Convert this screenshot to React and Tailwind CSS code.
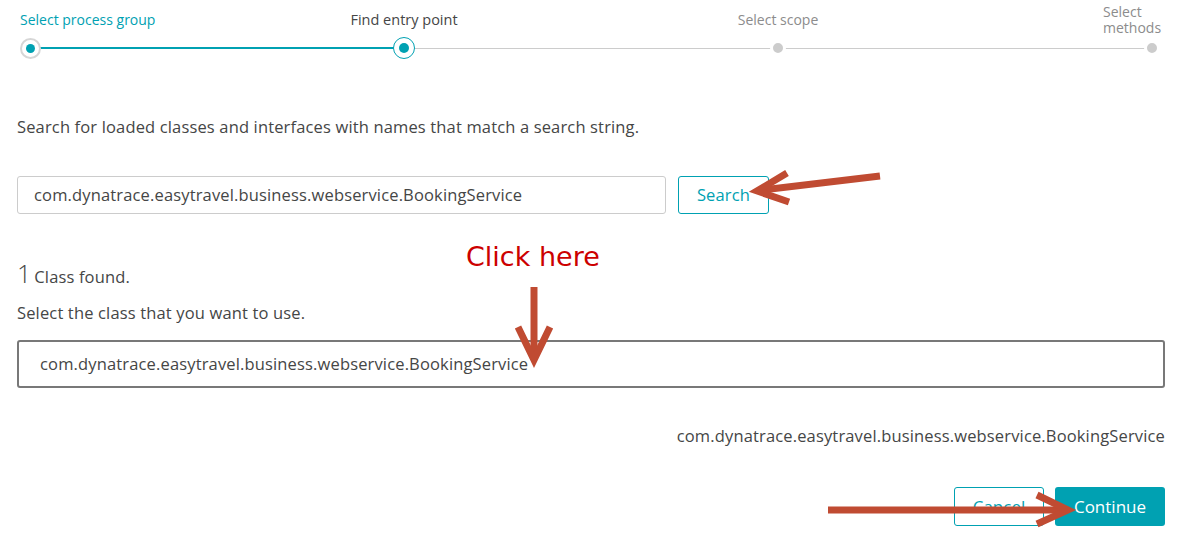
import React from "react";

function Arrows() {
  const c = "#c04b32";
  return (
    <svg
      className="pointer-events-none absolute left-0 top-0"
      width="1189"
      height="539"
      viewBox="0 0 1189 539"
    >
      <g stroke={c} strokeWidth="7" strokeLinecap="butt" fill="none" strokeLinejoin="miter">
        <line x1="880" y1="176" x2="762" y2="190" />
        <polyline points="787,173 757,191 789,202" />
        <line x1="534" y1="287" x2="534" y2="356" />
        <polyline points="518,327 534,360 550,327" />
        <line x1="828" y1="510" x2="1062" y2="510" />
        <polyline points="1037,495 1068,510 1037,524" />
      </g>
    </svg>
  );
}

export default function App() {
  const font = "font-['Open_Sans',sans-serif]";
  return (
    <div className={`relative h-[539px] w-[1189px] overflow-hidden bg-white text-[#454646] ${font}`}>
      {/* Stepper labels */}
      <div className="grid h-[40px] grid-cols-[197px_374px_374px_1fr] pl-[20px] pr-[26px] text-[14px] leading-[16px]">
        <div className="flex items-center text-[#00a1b2]">Select process group</div>
        <div className="flex items-center justify-center text-[14.5px] text-[#454646]">Find entry point</div>
        <div className="flex items-center justify-center text-[#8c8c8c]">Select scope</div>
        <div className="flex items-center justify-end">
          <div className="w-[60px] text-left text-[#8c8c8c]">Select methods</div>
        </div>
      </div>
      {/* Stepper dots */}
      <div className="flex h-[16px] items-center pl-[30px] pr-[37px]">
        <div className="relative z-10 flex w-0 justify-center">
          <div className="flex h-[21px] w-[21px] shrink-0 items-center justify-center rounded-full border-2 border-[#d6d6d6] bg-white">
            <div className="h-[9px] w-[9px] rounded-full bg-[#00a1b2]" />
          </div>
        </div>
        <div className="h-[2px] flex-1 bg-[#00a1b2]" />
        <div className="relative z-10 flex w-0 justify-center">
          <div className="flex h-[22px] w-[22px] shrink-0 items-center justify-center rounded-full border-[1.5px] border-[#00a1b2] bg-white">
            <div className="h-[10px] w-[10px] rounded-full bg-[#00a1b2]" />
          </div>
        </div>
        <div className="h-px flex-1 bg-[#cccccc]" />
        <div className="relative z-10 flex w-0 justify-center">
          <div className="h-[16px] w-[16px] shrink-0 rounded-full border-[3px] border-white bg-[#cccccc]" />
        </div>
        <div className="h-px flex-1 bg-[#cccccc]" />
        <div className="relative z-10 flex w-0 justify-center">
          <div className="h-[16px] w-[16px] shrink-0 rounded-full border-[3px] border-white bg-[#cccccc]" />
        </div>
      </div>

      {/* Content */}
      <div className="pl-[17px] pr-[24px] text-[16.5px] tracking-[0.15px]">
        <p className="mt-[60px] leading-[22px]">
          Search for loaded classes and interfaces with names that match a search string.
        </p>
        <div className="mt-[38px] flex gap-[12px]">
          <div className="flex h-[38px] w-[649px] items-center rounded-[3px] border border-[#cccccc] px-[16px]">
            com.dynatrace.easytravel.business.webservice.BookingService
          </div>
          <button className="flex h-[38px] w-[91px] items-center justify-center rounded-[3px] border border-[#00a1b2] text-[#00a1b2]">
            Search
          </button>
        </div>

        <div className="mt-[45px] flex items-baseline leading-[28px]">
          <span className="text-[25px] font-light tracking-normal">1</span>
          <span className="ml-[3px]">Class found.</span>
        </div>
        <p className="mt-[11px] leading-[22px]">Select the class that you want to use.</p>
        <div className="mt-[16px] flex h-[48px] items-center rounded-[3px] border-2 border-[#787878] px-[21px]">
          com.dynatrace.easytravel.business.webservice.BookingService
        </div>
        <div className="mt-[37px] text-right leading-[22px]">
          com.dynatrace.easytravel.business.webservice.BookingService
        </div>
        <div className="mt-[40px] flex justify-end gap-[11px] text-[17px] tracking-normal">
          <button className="flex h-[39px] w-[90px] items-center justify-center rounded-[3px] border border-[#00a1b2] text-[#00a1b2]">
            Cancel
          </button>
          <button className="flex h-[39px] w-[110px] items-center justify-center rounded-[3px] bg-[#00a1b2] text-white">
            Continue
          </button>
        </div>
      </div>
      <div className="absolute left-[466px] top-[241px] font-['DejaVu_Sans',sans-serif] text-[27px] leading-[32px] text-[#cc0000]">
        Click here
      </div>
      <Arrows />
    </div>
  );
}
